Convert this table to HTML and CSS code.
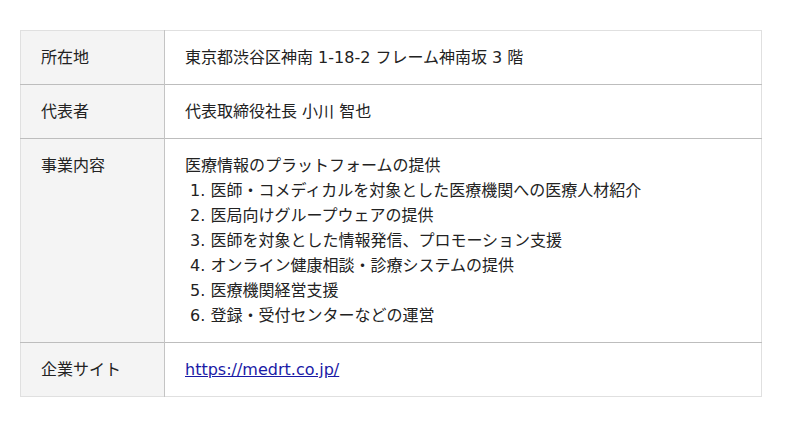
FILE: index.html
```html
<!DOCTYPE html>
<html lang="ja">
<head>
<meta charset="utf-8">
<link rel="stylesheet" href="styles.css">
</head>
<body>
<table class="info">
  <tr>
    <th>所在地</th>
    <td>東京都渋谷区神南 1-18-2 フレーム神南坂 3 階</td>
  </tr>
  <tr>
    <th>代表者</th>
    <td>代表取締役社長 小川 智也</td>
  </tr>
  <tr>
    <th>事業内容</th>
    <td>医療情報のプラットフォームの提供<br>&nbsp;1. 医師・コメディカルを対象とした医療機関への医療人材紹介<br>&nbsp;2. 医局向けグループウェアの提供<br>&nbsp;3. 医師を対象とした情報発信、プロモーション支援<br>&nbsp;4. オンライン健康相談・診療システムの提供<br>&nbsp;5. 医療機関経営支援<br>&nbsp;6. 登録・受付センターなどの運営</td>
  </tr>
  <tr>
    <th>企業サイト</th>
    <td><a class="link" href="#">https://medrt.co.jp/</a></td>
  </tr>
</table>
</body>
</html>
```

FILE: styles.css
```css
html, body {
  margin: 0;
  padding: 0;
  background: #fff;
}
body {
  padding: 30px 38px 0 20px;
  font-family: "DejaVu Sans", "Noto Sans CJK JP", sans-serif;
  font-size: 16px;
  color: #222;
}
.info {
  border-collapse: collapse;
  width: 742px;
  border: 1px solid #e0e0e0;
}
.info th,
.info td {
  padding: 14px 20px;
  line-height: 25px;
  text-align: left;
  vertical-align: top;
  font-weight: normal;
  border-top: 1px solid #bdbdbd;
}
.info tr:first-child th,
.info tr:first-child td {
  border-top: 1px solid #e0e0e0;
}
.info th {
  width: 103px;
  background: #f4f4f4;
  border-right: 1px solid #c4c4c4;
}
.link {
  color: #1a1aa6;
}
```
